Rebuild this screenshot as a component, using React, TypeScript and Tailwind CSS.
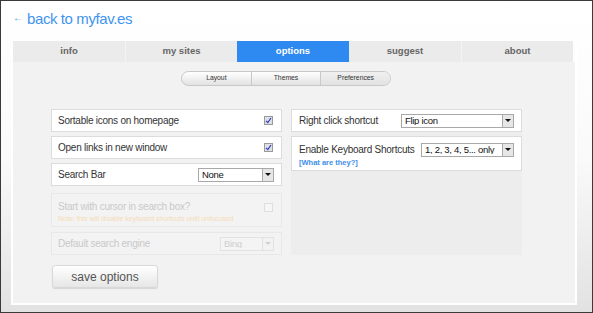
import React from "react";

const SelectBox = ({ value, width, disabled = false }: { value: string; width: number; disabled?: boolean }) => (
  <div
    className={`flex items-center h-[14px] border ${disabled ? "border-[#e2e2e2] bg-[#f4f4f4] text-[#cfcfcf]" : "border-[#a8a8a8] bg-white text-[#111]"}`}
    style={{ width }}
  >
    <span className="flex-1 pl-[3px] text-[9.5px] leading-none tracking-[-0.3px] truncate">{value}</span>
    <span
      className={`w-[11px] h-[12px] flex items-center justify-center border-l ${disabled ? "border-[#e2e2e2] bg-[#f2f2f2]" : "border-[#a8a8a8] bg-[#e6e6e6]"}`}
    >
      <span
        className={`w-0 h-0 border-l-[3px] border-r-[3px] border-t-[3px] border-l-transparent border-r-transparent ${disabled ? "border-t-[#d0d0d0]" : "border-t-[#111]"}`}
      />
    </span>
  </div>
);

const Check = ({ checked, disabled = false }: { checked: boolean; disabled?: boolean }) => (
  <div
    className={`w-[9px] h-[9px] border flex items-center justify-center ${disabled ? "border-[#dedede] bg-[#f6f6f6]" : "border-[#9a9a9a] bg-[#dfe0e6]"}`}
  >
    {checked && (
      <svg width="7" height="7" viewBox="0 0 7 7">
        <path d="M1 3.8 L2.8 5.6 L6 1" stroke="#2b3fb8" strokeWidth="1.2" fill="none" />
      </svg>
    )}
  </div>
);

export default function App() {
  const tabs = ["info", "my sites", "options", "suggest", "about"];
  return (
    <div
      className="w-[593px] h-[313px] border border-[#3a3a3a] flex flex-col bg-gradient-to-b from-white via-[#fafafa] to-[#e2e2e2]"
      style={{ fontFamily: '"Liberation Sans", Arial, sans-serif' }}
    >
      <div className="h-[38px] pl-[12px] pt-[9px] flex items-start">
        <a className="flex items-start text-[#3f95ee] no-underline">
          <span className="text-[10px] leading-none mr-[4px] mt-[3px]">←</span>
          <span className="text-[15px] leading-[18px] tracking-[-0.4px]">back to myfav.es</span>
        </a>
      </div>
      <div className="ml-[10px] w-[566px] h-[266px] border-2 border-white flex flex-col">
        <div className="flex h-[21px]">
          {tabs.map((t, i) => (
            <div
              key={t}
              className={`w-[112px] flex items-center justify-center text-[9.5px] font-bold ${
                t === "options" ? "bg-[#2e89f0] text-white" : "bg-[#ebebeb] text-[#666]"
              } ${i > 0 && t !== "options" && tabs[i - 1] !== "options" ? "border-l border-[#f4f4f4]" : ""}`}
            >
              {t}
            </div>
          ))}
        </div>
        <div className="flex-1 bg-[#f2f2f2] flex flex-col">
          <div className="pt-[9px] pl-[168px]">
            <div className="flex w-[210px] h-[15px] rounded-full border border-[#c8c8c8] overflow-hidden bg-gradient-to-b from-white to-[#e2e2e2] text-[6.8px] text-[#333]">
              <div className="flex-1 flex items-center justify-center">Layout</div>
              <div className="flex-1 flex items-center justify-center border-l border-[#c8c8c8]">Themes</div>
              <div className="flex-1 flex items-center justify-center border-l border-[#c8c8c8] bg-gradient-to-b from-[#f0f0f0] to-[#e2e2e2]">
                Preferences
              </div>
            </div>
          </div>
          <div className="flex pl-[38px] pt-[23px] gap-[9px]">
            <div className="w-[231px] flex flex-col text-[10px] tracking-[-0.25px] text-[#333]">
              <div className="h-[23px] bg-white border border-[#dcdcdc] flex items-center justify-between pl-[6px] pr-[8px]">
                <span>Sortable icons on homepage</span>
                <Check checked />
              </div>
              <div className="h-[23px] mt-[4px] bg-white border border-[#dcdcdc] flex items-center justify-between pl-[6px] pr-[8px]">
                <span>Open links in new window</span>
                <Check checked />
              </div>
              <div className="h-[23px] mt-[4px] bg-white border border-[#dcdcdc] flex items-center justify-between pl-[6px] pr-[7px]">
                <span>Search Bar</span>
                <SelectBox value="None" width={76} />
              </div>
              <div className="h-[34px] mt-[7px] bg-[#f3f3f3] border border-[#e8e8e8] flex items-start justify-between pl-[6px] pr-[8px] pt-[6px]">
                <div className="flex flex-col">
                  <span className="text-[#c9c9c9] leading-[13px]">Start with cursor in search box?</span>
                  <span className="text-[#f5dcb8] text-[7px] tracking-normal leading-[10px] mt-[1px]">
                    Note: this will disable keyboard shortcuts until unfocused
                  </span>
                </div>
                <div className="mt-[3px]">
                  <Check checked={false} disabled />
                </div>
              </div>
              <div className="h-[23px] mt-[5px] bg-[#f3f3f3] border border-[#e8e8e8] flex items-center justify-between pl-[6px] pr-[7px]">
                <span className="text-[#c9c9c9]">Default search engine</span>
                <SelectBox value="Bing" width={54} disabled />
              </div>
              <button className="mt-[10px] ml-[1px] w-[106px] h-[23px] rounded-[3px] border border-[#d8d8d8] bg-gradient-to-b from-white to-[#e6e6e6] shadow-[0_1px_1px_rgba(0,0,0,0.12)] text-[12px] tracking-normal text-[#555] flex items-center justify-center">
                save options
              </button>
            </div>
            <div className="w-[231px] h-[146px] flex flex-col bg-[#ededed] text-[10px] tracking-[-0.25px] text-[#333]">
              <div className="h-[23px] bg-white border border-[#dcdcdc] flex items-center justify-between pl-[7px] pr-[7px]">
                <span>Right click shortcut</span>
                <SelectBox value="Flip icon" width={113} />
              </div>
              <div className="h-[35px] mt-[4px] bg-white border border-[#dcdcdc] flex flex-col pl-[7px] pr-[7px] pt-[5px]">
                <div className="flex items-center justify-between">
                  <span>Enable Keyboard Shortcuts</span>
                  <SelectBox value="1, 2, 3, 4, 5... only" width={93} />
                </div>
                <span className="text-[7.5px] font-bold text-[#3d8ee8] tracking-normal leading-[10px] mt-[1px]">
                  [What are they?]
                </span>
              </div>
            </div>
          </div>
        </div>
      </div>
    </div>
  );
}
